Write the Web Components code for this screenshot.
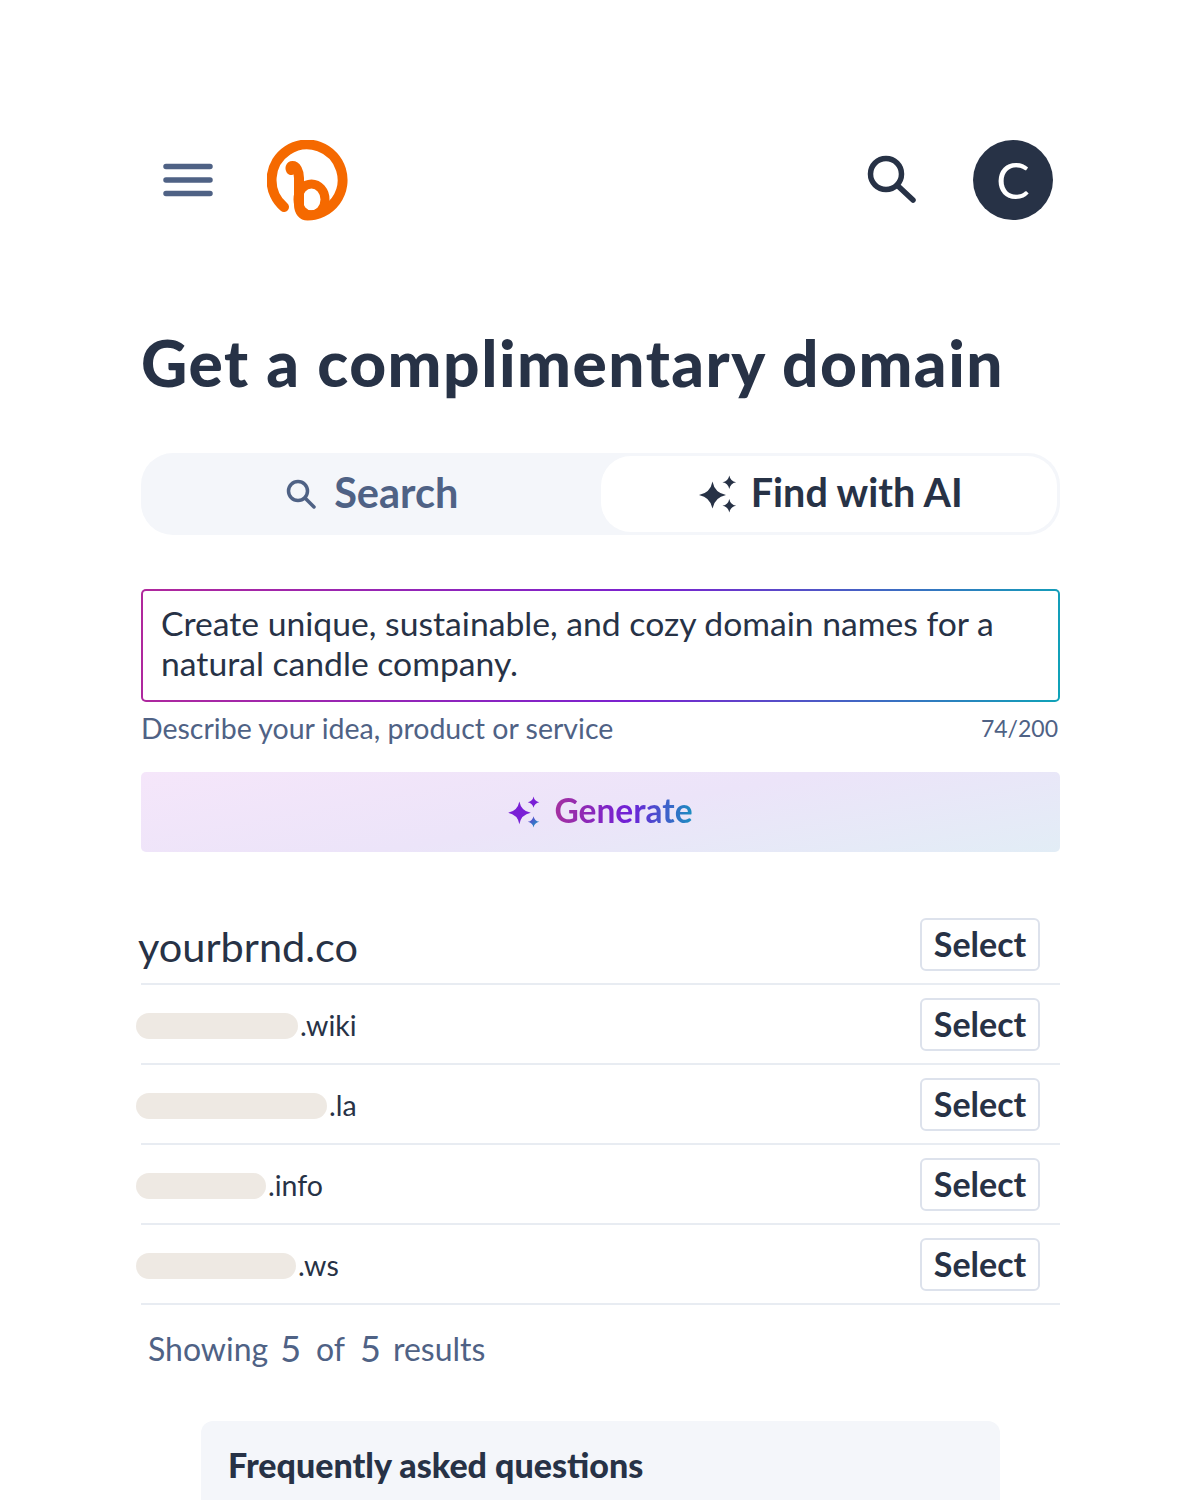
<!DOCTYPE html>
<html lang="en">
<head>
<meta charset="utf-8">
<title>Get a complimentary domain</title>
<style>
  html, body { margin: 0; background: #fff; }
  body {
    font-family: "Lato", "Liberation Sans", sans-serif;
    color: #273246;
  }
</style>
</head>
<body>
<domain-page>
  <top-bar></top-bar>
  <page-title>Get a complimentary domain</page-title>
  <mode-tabs></mode-tabs>
  <ai-prompt count="74/200" hint="Describe your idea, product or service">Create unique, sustainable, and cozy domain names for a natural candle company.</ai-prompt>
  <generate-button>Generate</generate-button>
  <domain-list>
    <domain-row big>yourbrnd.co</domain-row>
    <domain-row mask="162" tld=".wiki"></domain-row>
    <domain-row mask="191" tld=".la"></domain-row>
    <domain-row mask="130" tld=".info"></domain-row>
    <domain-row mask="160" tld=".ws"></domain-row>
  </domain-list>
  <result-count></result-count>
  <faq-box>Frequently asked questions</faq-box>
</domain-page>

<script>
// four-point star, concave sides
const star = (cx, cy, r) => {
  const k = r * 0.16;
  return `<path d="M${cx} ${cy - r}Q${cx + k} ${cy - k} ${cx + r} ${cy}Q${cx + k} ${cy + k} ${cx} ${cy + r}Q${cx - k} ${cy + k} ${cx - r} ${cy}Q${cx - k} ${cy - k} ${cx} ${cy - r}z"/>`;
};
// sparkle used by the tab and the generate button (viewBox 0 0 38 38)
const SPARKS = star(13.5, 20, 13.5) + star(30.3, 7.3, 6.8) + star(30.3, 30.7, 6.8);

class DomainPage extends HTMLElement {
  constructor() {
    super();
    this.attachShadow({ mode: "open" });
    this.shadowRoot.innerHTML = `
      <style>
        :host { display: block; height: 1500px; overflow: hidden; padding: 140px 141px 0 141px; box-sizing: border-box; width: 1201px; }
      </style>
      <slot></slot>`;
  }
}
customElements.define("domain-page", DomainPage);

class TopBar extends HTMLElement {
  constructor() {
    super();
    this.attachShadow({ mode: "open" });
    this.shadowRoot.innerHTML = `
      <style>
        :host { display: flex; align-items: center; height: 80px; padding: 0 7px 0 22px; }
        svg { display: block; }
        .logo { margin-left: 54px; }
        .find { margin-left: auto; }
        .avatar {
          width: 80px; height: 80px; border-radius: 50%; margin-left: 56px;
          background: #273246; color: #fff;
          display: flex; align-items: center; justify-content: center;
          font-size: 50px; font-weight: 400;
        }
      </style>
      <svg width="50" height="36" viewBox="0 0 50 36"><g stroke="#4f6285" stroke-width="5.5" stroke-linecap="round"><path d="M3 4.500h44M3 18h44M3 31.500h44"/></g></svg>
      <svg class="logo" width="81" height="81" viewBox="0 0 81 81" fill="none" stroke="#f56900" stroke-width="10" stroke-linecap="round">
        <path d="M17 67A35.500 35.500 0 1 1 40.500 75.500C36 75.500 32 72 32 64V38C32 31 29 26 25.500 26C23.500 26 23 28 24 30"/>
        <ellipse cx="44.500" cy="59.500" rx="13.500" ry="15.500" stroke-width="9"/>
      </svg>
      <svg class="find" width="50" height="50" viewBox="0 0 50 50" fill="none" stroke="#273246" stroke-width="5.5" stroke-linecap="round"><circle cx="19" cy="19" r="15.500"/><path d="M31 31l15 14"/></svg>
      <div class="avatar">C</div>`;
  }
}
customElements.define("top-bar", TopBar);

class PageTitle extends HTMLElement {
  constructor() {
    super();
    this.attachShadow({ mode: "open" });
    this.shadowRoot.innerHTML = `
      <style>
        :host { display: block; padding: 105px 0 52px; }
        h1 { margin: 0; font-size: 64px; line-height: 76px; font-weight: 900; letter-spacing: 1.5px; color: #273246; white-space: nowrap; }
      </style>
      <h1><slot></slot></h1>`;
  }
}
customElements.define("page-title", PageTitle);

class ModeTabs extends HTMLElement {
  constructor() {
    super();
    this.attachShadow({ mode: "open" });
    this.shadowRoot.innerHTML = `
      <style>
        :host {
          display: grid; grid-template-columns: 1fr 1fr; height: 82px; padding: 3px;
          box-sizing: border-box; border-radius: 32px; background: #f4f6fa;
          font-weight: 700; margin-bottom: 54px;
        }
        div { display: flex; align-items: center; justify-content: center; border-radius: 30px; }
        span { padding-bottom: 5px; }
        .off { color: #4f6285; gap: 18px; font-size: 41.5px; }
        .on { background: #fff; color: #273246; gap: 14px; font-size: 39.5px; padding-left: 4px; }
        svg { display: block; }
      </style>
      <div class="off">
        <svg width="30" height="30" viewBox="0 0 30 30" fill="none" stroke="#4f6285" stroke-width="3.5" stroke-linecap="round"><circle cx="12" cy="12" r="9.500"/><path d="M19 19l9 9"/></svg>
        <span>Search</span>
      </div>
      <div class="on">
        <svg width="38" height="38" viewBox="0 0 38 38" fill="#273246">${SPARKS}</svg>
        <span>Find with AI</span>
      </div>`;
  }
}
customElements.define("mode-tabs", ModeTabs);

class AiPrompt extends HTMLElement {
  constructor() {
    super();
    this.attachShadow({ mode: "open" });
    this.shadowRoot.innerHTML = `
      <style>
        :host { display: block; margin-bottom: 26px; }
        .box {
          box-sizing: border-box; height: 113px; padding: 12px 18px;
          border: 2px solid transparent; border-radius: 5px;
          background: linear-gradient(#fff, #fff) padding-box,
            linear-gradient(100deg, #b0289c 0%, #7a22d0 55%, #0fa3b8 100%) border-box;
          font-size: 33.7px; line-height: 40px; color: #273246;
        }
        .meta {
          display: flex; justify-content: space-between; align-items: center; box-sizing: border-box;
          height: 44px; padding: 8px 2px 0 0; color: #4f6285; font-size: 28.5px;
        }
        .count { font-size: 23px; }
      </style>
      <div class="box"><slot></slot></div>
      <div class="meta"><span id="hint"></span><span class="count" id="count"></span></div>`;
  }
  connectedCallback() {
    this.shadowRoot.getElementById("hint").textContent = this.getAttribute("hint");
    this.shadowRoot.getElementById("count").textContent = this.getAttribute("count");
  }
}
customElements.define("ai-prompt", AiPrompt);

class GenerateButton extends HTMLElement {
  constructor() {
    super();
    this.attachShadow({ mode: "open" });
    this.shadowRoot.innerHTML = `
      <style>
        :host {
          display: flex; align-items: center; justify-content: center; gap: 14px;
          height: 80px; border-radius: 5px; margin-bottom: 66px;
          background: linear-gradient(170deg, #f5e6fa 0%, #ece4f9 50%, #e2edf6 100%);
          font-size: 33.5px; font-weight: 700;
        }
        span {
          background: linear-gradient(90deg, #a5309f 0%, #6e20d8 55%, #1a8fc0 100%);
          -webkit-background-clip: text; background-clip: text; color: transparent;
          margin-bottom: 5px;
        }
        svg { display: block; }
      </style>
      <svg width="32" height="32" viewBox="0 0 38 38">
        <defs><linearGradient id="g" gradientUnits="userSpaceOnUse" x1="10" y1="10" x2="36" y2="36"><stop offset=".45" stop-color="#7a1fd6"/><stop offset="1" stop-color="#1a9ac0"/></linearGradient></defs>
        <g fill="url(#g)">${SPARKS}</g>
      </svg>
      <span><slot></slot></span>`;
  }
}
customElements.define("generate-button", GenerateButton);

class DomainList extends HTMLElement {
  constructor() {
    super();
    this.attachShadow({ mode: "open" });
    this.shadowRoot.innerHTML = `
      <style>:host { display: block; margin-bottom: 20px; }</style>
      <slot></slot>`;
  }
}
customElements.define("domain-list", DomainList);

class DomainRow extends HTMLElement {
  constructor() {
    super();
    this.attachShadow({ mode: "open" });
    this.shadowRoot.innerHTML = `
      <style>
        :host {
          display: flex; align-items: center; justify-content: space-between;
          box-sizing: border-box; height: 80px; padding: 0 20px 0 0;
          border-bottom: 2px solid #e8ecf2; font-size: 28.5px; color: #273246;
        }
        :host([big]) { height: 67px; align-items: flex-start; font-size: 41.5px; }
        .name { display: flex; align-items: center; margin-left: -5px; padding-top: 3px; }
        :host([big]) .name { margin-left: -3px; padding-top: 3px; }
        .mask { height: 26px; border-radius: 13px; background: #eee9e3; margin-right: 2px; }
        .tld { margin-bottom: 2px; }
        button {
          width: 120px; height: 53px; box-sizing: border-box; padding: 0 0 2px;
          border: 2px solid #dde2ec; border-radius: 6px; background: #fff;
          font: 700 34px "Lato", "Liberation Sans", sans-serif; color: #273246;
        }
      </style>
      <div class="name"><slot></slot></div>
      <button>Select</button>`;
  }
  connectedCallback() {
    const mask = this.getAttribute("mask");
    if (!mask) return;
    const name = this.shadowRoot.querySelector(".name");
    name.innerHTML = `<div class="mask" style="width:${mask}px"></div><span class="tld">${this.getAttribute("tld")}</span>`;
  }
}
customElements.define("domain-row", DomainRow);

class ResultCount extends HTMLElement {
  constructor() {
    super();
    this.attachShadow({ mode: "open" });
    this.shadowRoot.innerHTML = `
      <style>
        :host { display: flex; gap: 12px; padding-left: 7px; height: 46px; margin-bottom: 50px; align-items: center; font-size: 32px; color: #4f6285; }
        b { font-weight: 400; font-size: 36px; }
        .of { margin: 0 3px; }
      </style>
      <span>Showing</span><b>5</b><span class="of">of</span><b>5</b><span>results</span>`;
  }
}
customElements.define("result-count", ResultCount);

class FaqBox extends HTMLElement {
  constructor() {
    super();
    this.attachShadow({ mode: "open" });
    this.shadowRoot.innerHTML = `
      <style>
        :host {
          display: block; margin: 0 60px; height: 200px; padding: 24px 27px; box-sizing: border-box;
          background: #f4f6fa; border-radius: 12px 12px 0 0;
          font-size: 34px; line-height: 40px; font-weight: 900; color: #273246;
        }
      </style>
      <slot></slot>`;
  }
}
customElements.define("faq-box", FaqBox);
</script>
</body>
</html>
